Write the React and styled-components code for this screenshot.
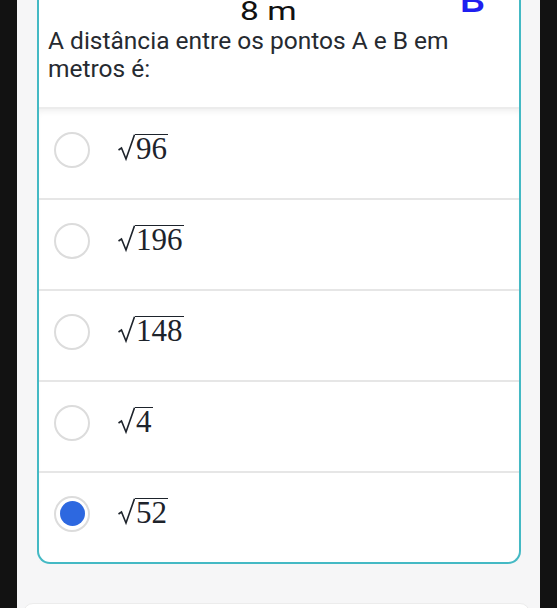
import React from 'react'
import styled, { createGlobalStyle } from 'styled-components'

const GlobalStyle = createGlobalStyle`
  html, body {
    margin: 0;
    padding: 0;
    background: #121212;
    height: 608px;
    overflow: hidden;
  }
`

const Screen = styled.div`
  margin: 0 17px;
  height: 608px;
  background: #f6f6f7;
  overflow: hidden;
  font-family: Roboto, "Liberation Sans", sans-serif;
`

const Card = styled.div`
  margin-left: 20px;
  width: 480px;
  background: #fff;
  border: 2px solid #44b9c4;
  border-top: none;
  border-radius: 0 0 13px 13px;
`

const Figure = styled.div`
  height: 24px;
  display: flex;
  align-items: flex-end;
  overflow: hidden;
`

const Measure = styled.span`
  margin-left: 201px;
  font-size: 25px;
  line-height: 24px;
  color: #111;
  transform: scaleX(1.34);
  transform-origin: left bottom;
`

const Point = styled.span`
  margin-left: 178px;
  margin-bottom: 14px;
  font-family: "Liberation Sans", sans-serif;
  font-weight: bold;
  font-size: 34px;
  line-height: 20px;
  color: #1f1ff0;
`

const Question = styled.p`
  margin: 0;
  padding: 3px 9px 24px;
  font-size: 24.5px;
  line-height: 28px;
  color: #262a30;
`

const Options = styled.div`
  border-top: 2px solid #ececec;
  box-shadow: inset 0 5px 6px -3px rgba(0, 0, 0, 0.07);
`

const Option = styled.div`
  height: 81px;
  padding: 0 0 8px 15px;
  display: flex;
  align-items: center;
  border-top: ${p => (p.first ? 'none' : '2px solid #e6e6e6')};
`

const Radio = styled.div`
  width: 32px;
  height: 32px;
  border-radius: 50%;
  border: 2px solid #dcdcdc;
  background: #fff;
  display: flex;
  align-items: center;
  justify-content: center;
  flex-shrink: 0;
`

const Dot = styled.div`
  width: 25px;
  height: 25px;
  border-radius: 50%;
  background: #2d68e0;
`

const Math = styled.div`
  margin-left: 28px;
  margin-bottom: 4px;
  display: flex;
  align-items: flex-start;
  font-family: "Liberation Serif", "DejaVu Serif", serif;
  font-size: 31px;
  line-height: 28px;
  color: #1d232b;
`

const Radicand = styled.span`
  border-top: 1.5px solid #1d232b;
  padding: 0 1px;
  margin-top: 2px;
`

const NextCard = styled.div`
  margin: 39px 10px 0 6px;
  height: 40px;
  background: #fff;
  border: 1px solid #ececec;
  border-radius: 10px;
`

function Sqrt({ value }) {
  return (
    <Math>
      <svg width="17" height="30" viewBox="0 0 17 30">
        <path d="M0.5 18 L3.5 16 L8 27 L16.5 2.7" fill="none" stroke="#1d232b" strokeWidth="1.6" />
      </svg>
      <Radicand>{value}</Radicand>
    </Math>
  )
}

const answers = ['96', '196', '148', '4', '52']

export default function App() {
  return (
    <>
      <GlobalStyle />
      <Screen>
        <Card>
          <Figure>
            <Measure>8 m</Measure>
            <Point>B</Point>
          </Figure>
          <Question>A distância entre os pontos A e B em metros é:</Question>
          <Options>
            {answers.map((a, i) => (
              <Option key={a} first={i === 0}>
                <Radio>{i === 4 && <Dot />}</Radio>
                <Sqrt value={a} />
              </Option>
            ))}
          </Options>
        </Card>
        <NextCard />
      </Screen>
    </>
  )
}
